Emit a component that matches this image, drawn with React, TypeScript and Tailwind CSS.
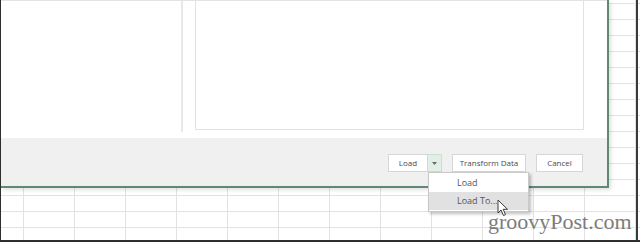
import React from 'react';

const gridBg =
  'bg-[linear-gradient(to_right,#e2e2e2_1px,transparent_1px),linear-gradient(to_bottom,#e2e2e2_1px,transparent_1px)] bg-[size:51px_16px] bg-[position:23px_3px]';

const Cursor = () => (
  <svg width="14" height="18" viewBox="0 0 14 18" className="block">
    <path
      d="M1 1 L1 14 L4 11 L6.5 16.5 L8.5 15.6 L6.2 10.3 L10.5 10.3 Z"
      fill="#ffffff"
      stroke="#3a3a3a"
      strokeWidth="1"
      strokeLinejoin="round"
    />
  </svg>
);

const Btn = ({ label, w }: { label: string; w: string }) => (
  <button className={`${w} h-[18px] bg-white border border-[#d6d6d6] text-[8px] text-[#4a4a4a] flex items-center justify-center`}>
    {label}
  </button>
);

export default function App() {
  return (
    <div className={`relative w-[640px] h-[242px] bg-white overflow-hidden font-['Open_Sans',sans-serif] ${gridBg}`}>
      {/* query dialog */}
      <div className="absolute left-[1px] top-0 w-[608px] h-[188px] bg-white border-r-2 border-b-2 border-[#5e8a73] shadow-[2px_2px_4px_rgba(0,0,0,0.12)] flex flex-col">
        <div className="h-[138px] flex border-t border-[#e3e3e3]">
          <div className="w-[182px] h-[131px] border-r-2 border-[#e8e8e8]" />
          <div className="w-[12px]" />
          <div className="w-[389px] h-[129px] border-l border-r border-b border-[#e2e2e2]" />
        </div>
        <div className="flex-1 bg-[#f0f0f0] flex items-start justify-end pt-[16px] pr-[24px]">
          <div className="flex">
            <Btn label="Load" w="w-[40px]" />
            <div className="w-[14px] h-[18px] bg-[#e2efe7] border border-l-0 border-[#cfdcd4] flex items-center justify-center">
              <svg width="5" height="3" viewBox="0 0 5 3">
                <path d="M0 0 L5 0 L2.5 3 Z" fill="#6a6a6a" />
              </svg>
            </div>
          </div>
          <div className="ml-[10px]">
            <Btn label="Transform Data" w="w-[74px]" />
          </div>
          <div className="ml-[10px]">
            <Btn label="Cancel" w="w-[47px]" />
          </div>
        </div>
      </div>

      {/* load menu */}
      <div className="absolute left-[428px] top-[172px] w-[101px] bg-white border border-[#c9c9c9] shadow-[2px_2px_3px_rgba(0,0,0,0.25)] py-[1px] text-[9px] text-[#555555]">
        <div className="h-[18px] flex items-center pl-[28px]">Load</div>
        <div className="h-[18px] flex items-center pl-[28px] bg-[#e1e1e1]">Load To...</div>
      </div>

      <div className="absolute left-[497px] top-[199px]">
        <Cursor />
      </div>

      {/* watermark */}
      <div className="absolute left-[488px] top-[211px] text-[22px] leading-none text-[#7c7c7c] font-['Liberation_Serif',serif]">
        groovyPost.com
      </div>

      {/* screen frame */}
      <div className="absolute left-0 top-0 w-[1px] h-full bg-[#2e2e2e]" />
      <div className="absolute left-[636px] top-0 w-[2px] h-full bg-[#3a3a3a]" />
      <div className="absolute left-0 top-[240px] w-full h-[2px] bg-[#2e2e2e]" />
    </div>
  );
}
